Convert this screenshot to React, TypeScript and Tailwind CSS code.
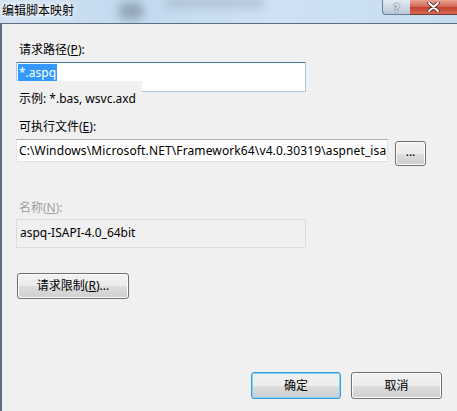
import React from "react";

const font = { fontFamily: '"Noto Sans", "Noto Sans CJK SC", sans-serif' };

function Btn({ children, className = "", def = false }: { children: React.ReactNode; className?: string; def?: boolean }) {
  return (
    <div
      className={
        "flex items-center justify-center rounded-[3px] border text-[12px] text-black " +
        (def
          ? "border-[#3c9ad6] shadow-[inset_0_0_0_1px_#7fd3f7] bg-[linear-gradient(#f2f2f2_0%,#ebebeb_50%,#dddddd_51%,#cfcfcf_100%)] "
          : "border-[#707070] shadow-[inset_0_0_0_1px_#fcfcfc] bg-[linear-gradient(#f2f2f2_0%,#ebebeb_50%,#dddddd_51%,#cfcfcf_100%)] ") +
        className
      }
    >
      {children}
    </div>
  );
}

export default function App() {
  return (
    <div className="w-[457px] h-[411px] overflow-hidden bg-[#f0f0f0] flex flex-col" style={font}>
      {/* title bar */}
      <div className="relative h-[23px] shrink-0 bg-[linear-gradient(90deg,#d2e3f3_0%,#c2d9ef_30%,#cfe2f4_60%,#c6dcf1_100%)] overflow-hidden">
        <div className="absolute left-[118px] top-[2px] w-[26px] h-[18px] rounded-full bg-[#7f909f] blur-[5px] opacity-70" />
        <div className="absolute left-[165px] top-[-2px] w-[100px] h-[10px] rounded-full bg-[#a7b7c6] blur-[5px] opacity-70" />
        <div className="absolute left-[2px] top-[3px] text-[12px] leading-[16px] text-black [text-shadow:0_0_6px_#ffffff,0_0_8px_#ffffff]">编辑脚本映射</div>
        <div className="absolute left-[382px] top-0 w-[29px] h-[15px] rounded-bl-[4px] border border-t-0 border-[#6d7d90] bg-[linear-gradient(#e3ebf3,#b9c9db)] flex items-center justify-center text-[11px] font-bold leading-[13px] text-white [text-shadow:0_0_1px_#334455,0_0_2px_#334455]">?</div>
        <div className="absolute left-[410px] top-0 w-[47px] h-[15px] border-b border-[#6d3c36] bg-[linear-gradient(#e8a396,#d06452_50%,#c0402c_51%,#d76a52)] flex items-center justify-center">
          <svg width="13" height="10" viewBox="0 0 13 10">
            <path d="M2 1 L11 9 M11 1 L2 9" stroke="#4a2a2a" strokeWidth="3.6" strokeLinecap="round" />
            <path d="M2 1 L11 9 M11 1 L2 9" stroke="#ffffff" strokeWidth="2" strokeLinecap="round" />
          </svg>
        </div>
      </div>
      {/* client */}
      <div className="flex-1 border-t border-l-2 border-[#5e6e7f] flex flex-col pl-[14px] text-[12px] leading-[16px] text-black">
        <div className="mt-[18px] ml-[3px]">请求路径(<span className="underline">P</span>):</div>
        <div className="mt-[4px] w-[290px] h-[30px] bg-white border border-[#a8c8e4] border-t-[#3d7bad] px-[1px] pt-[1px]">
          <span className="bg-[#3399ff] text-white inline-block h-[17px] leading-[17px] px-[1px]">*.aspq</span>
        </div>
        <div className="relative mt-[-11px] w-[126px] h-[26px] bg-[#f0f0f0] flex items-end pl-[3px]">
          <span>示例: *.bas, wsvc.axd</span>
        </div>
        <div className="mt-[12px] ml-[3px] w-[200px]">可执行文件(<span className="underline">E</span>):</div>
        <div className="flex items-start">
          <div className="mt-[4px] w-[372px] h-[23px] bg-white border border-[#e2e3ea] border-t-[#abadb3] overflow-hidden whitespace-nowrap pl-[2px] leading-[21px] tracking-[0.12px]">
            C:\Windows\Microsoft.NET\Framework64\v4.0.30319\aspnet_isapi.dll
          </div>
          <Btn className="mt-[6px] ml-[7px] w-[31px] h-[25px] pb-[3px]">...</Btn>
        </div>
        <div className="mt-[34px] ml-[3px] text-[#a0a0a0]">名称(<span className="underline">N</span>):</div>
        <div className="mt-[3px] w-[290px] h-[29px] border border-[#dcdcdc] pl-[3px] pt-[5px]">aspq-ISAPI-4.0_64bit</div>
        <Btn className="mt-[25px] ml-[1px] w-[112px] h-[26px]">请求限制(<span className="underline">R</span>)...</Btn>
        <div className="mt-[73px] flex gap-[10px] pl-[235px]">
          <Btn def className="w-[90px] h-[27px]">确定</Btn>
          <Btn className="w-[91px] h-[27px]">取消</Btn>
        </div>
      </div>
    </div>
  );
}
